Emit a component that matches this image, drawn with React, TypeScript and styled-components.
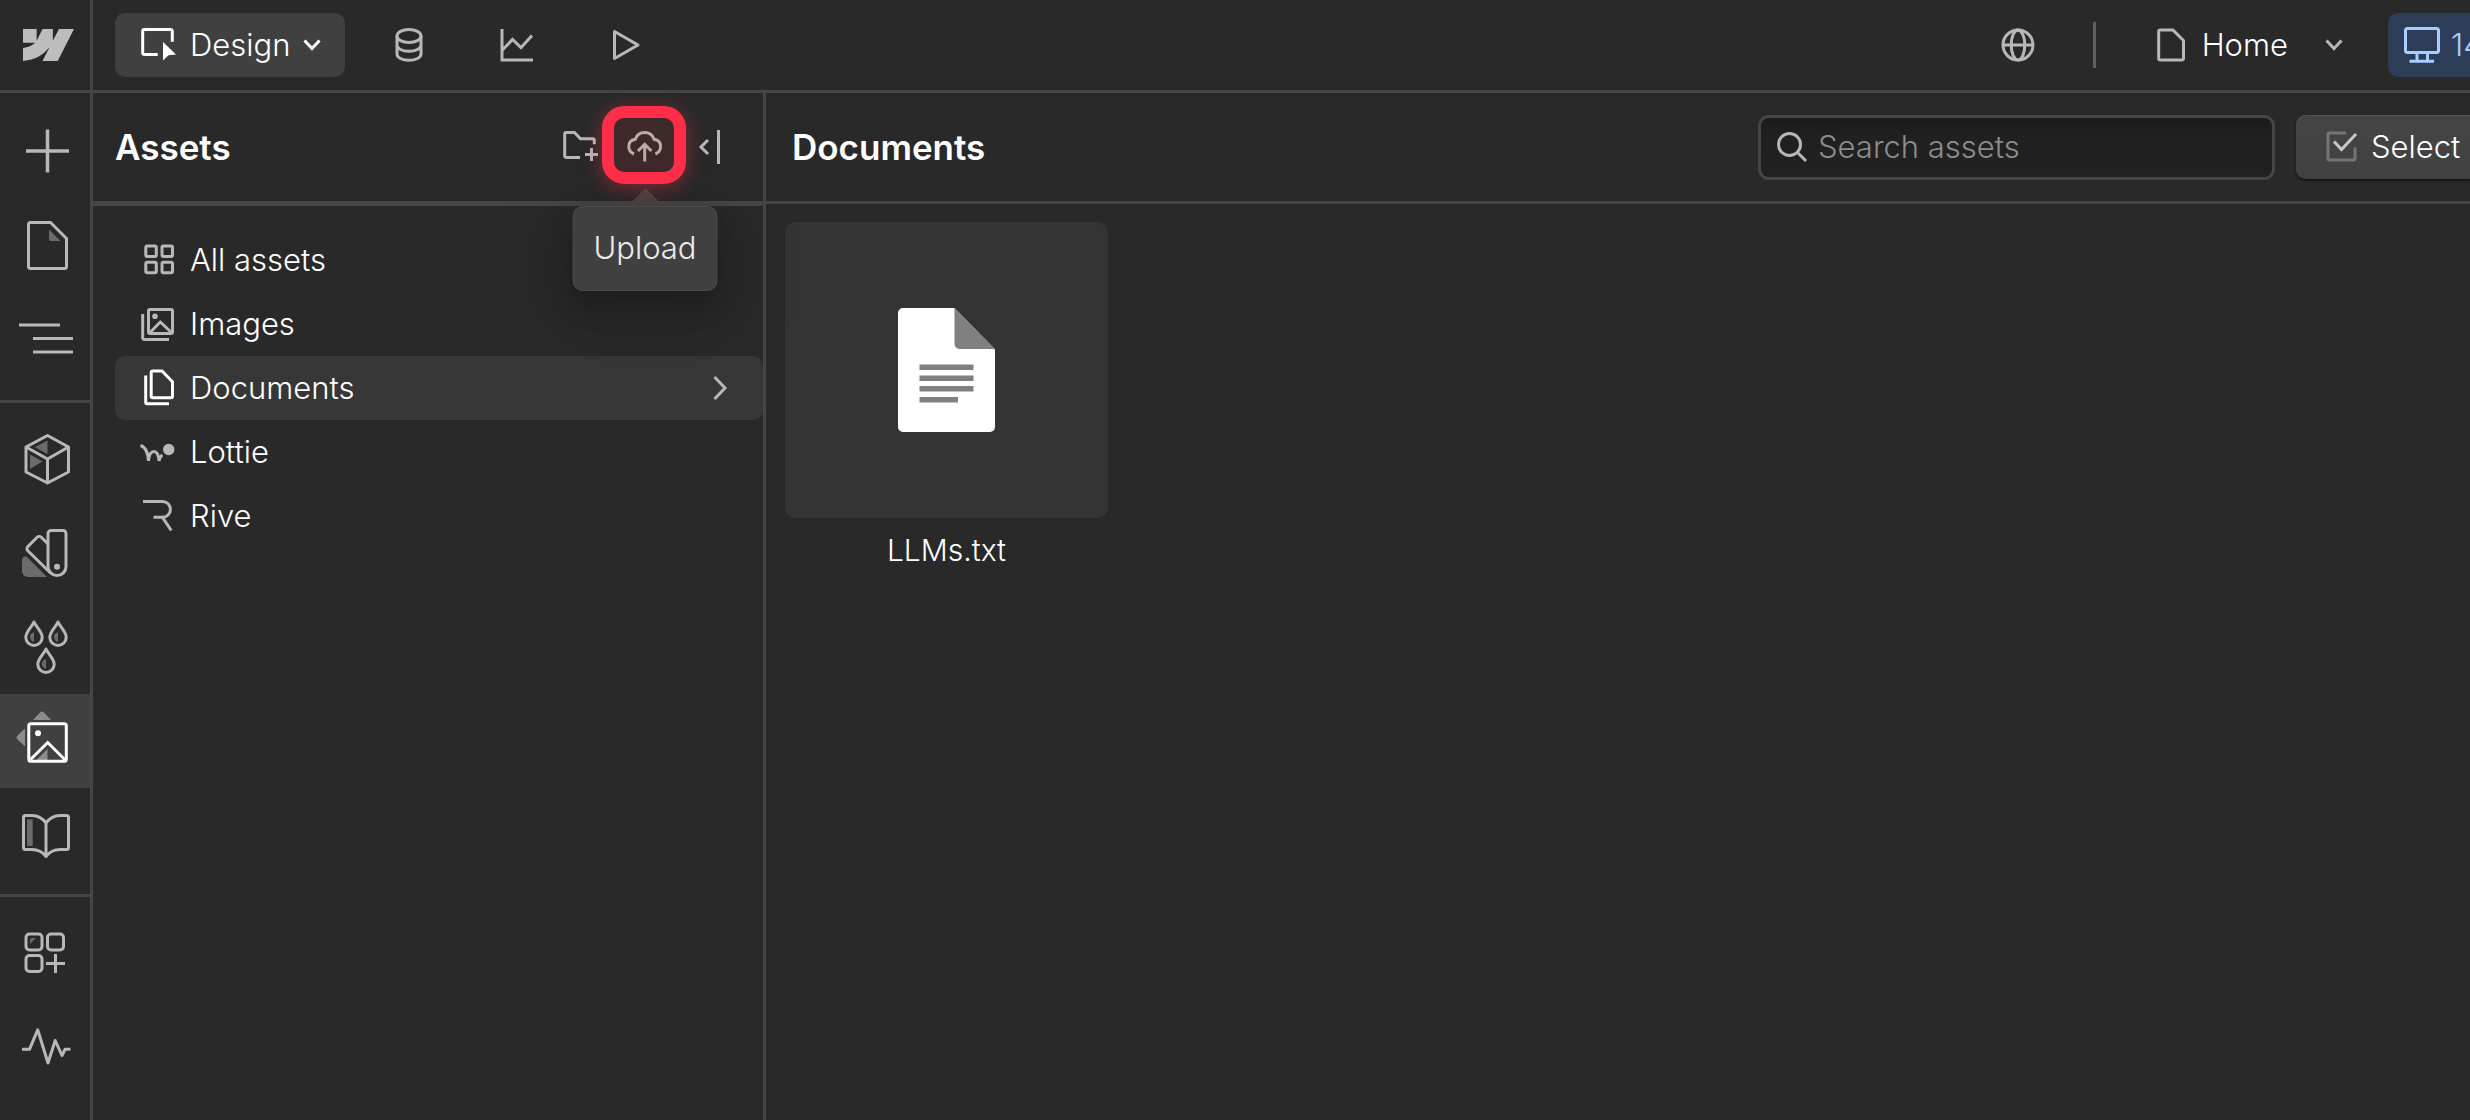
import React from 'react';
import styled, { createGlobalStyle } from 'styled-components';

const color = {
  bg: '#292929',
  line: '#464646',
  raised: '#404040',
  selected: '#373737',
  tile: '#343434',
  icon: '#b8b8b8',
  iconFill: '#6b6b6b',
  text: '#ffffff',
  muted: '#8c8c8c',
  accent: '#ff2e48',
};

const GlobalStyle = createGlobalStyle`
  *, *::before, *::after { box-sizing: border-box; }
  body {
    margin: 0;
    background: ${color.bg};
    color: ${color.text};
    font-family: Inter, "Liberation Sans", sans-serif;
    font-size: 31px;
    font-weight: 300;
    line-height: 40px;
    overflow: hidden;
  }
  button, input { font: inherit; color: inherit; margin: 0; }
  button { background: none; border: 0; padding: 0; cursor: pointer; }
`;

const Shell = styled.div`
  display: flex;
  min-height: 100vh;
`;

const Rail = styled.nav`
  flex: none;
  width: 93px;
  border-right: 3px solid ${color.line};
`;

const LogoLink = styled.a`
  display: flex;
  align-items: center;
  justify-content: center;
  height: 93px;
  padding-left: 6px;
  border-bottom: 3px solid ${color.line};
`;

const RailGroup = styled.div<{ $first?: boolean }>`
  display: flex;
  flex-direction: column;
  padding: ${p => (p.$first ? '11px 0 14px' : '9px 0 12px')};

  & + & { border-top: 3px solid ${color.line}; }
`;

const RailButton = styled.button<{ $active?: boolean }>`
  display: flex;
  align-items: center;
  justify-content: center;
  height: 94px;
  color: ${p => (p.$active ? color.text : color.icon)};
  background: ${p => (p.$active ? color.raised : 'transparent')};
`;

const Glyph = styled.svg`
  display: block;
  flex: none;
  overflow: visible;
  fill: none;
  stroke: currentColor;
  stroke-width: 3;

  .shade { fill: ${color.iconFill}; stroke: none; }
  .shade-light { fill: #8c8c8c; stroke: none; }
  .solid { fill: currentColor; stroke: none; }
`;

const Workspace = styled.div`
  flex: 1;
  min-width: 0;
  display: flex;
  flex-direction: column;
`;

const TopBar = styled.header`
  display: flex;
  align-items: center;
  height: 93px;
  padding-left: 22px;
  border-bottom: 3px solid ${color.line};
`;

const ModeButton = styled.button`
  display: flex;
  align-items: center;
  width: 230px;
  height: 64px;
  padding-left: 26px;
  gap: 13px;
  border-radius: 10px;
  background: ${color.raised};
`;

const TopTools = styled.div`
  display: flex;
  margin-left: 10px;
`;

const ToolButton = styled.button`
  display: flex;
  align-items: center;
  justify-content: center;
  width: 108px;
  height: 64px;
  color: ${color.icon};
`;

const TopRight = styled.div`
  display: flex;
  align-items: center;
  margin-left: auto;
`;

const Separator = styled.span`
  width: 3px;
  height: 46px;
  margin: 0 61px 0 21px;
  background: #5e5e5e;
`;

const PageButton = styled.button`
  display: flex;
  align-items: center;
  gap: 17px;
  height: 64px;
  margin-right: 45px;

  svg { color: ${color.icon}; }
  svg:last-child { margin-left: 20px; }
`;

const BreakpointButton = styled.button`
  display: flex;
  align-items: center;
  gap: 11px;
  width: 82px;
  height: 64px;
  padding-left: 16px;
  border-radius: 10px 0 0 10px;
  background: #2e3d57;
  color: #a9cdff;
  overflow: hidden;
`;

const Body = styled.div`
  flex: 1;
  display: flex;
`;

const Panel = styled.aside`
  flex: none;
  width: 673px;
  border-right: 3px solid ${color.line};
`;

const PanelHeader = styled.div`
  display: flex;
  align-items: center;
  height: 113px;
  padding: 0 22px;
  border-bottom: 5px solid ${color.line};
`;

const Title = styled.h2`
  margin: 0 auto 0 0;
  font-size: 35px;
  line-height: 40px;
  font-weight: 600;
`;

const PanelActions = styled.div`
  display: flex;
`;

const ActionButton = styled.button`
  display: flex;
  align-items: center;
  justify-content: center;
  width: 64px;
  height: 64px;
  color: ${color.icon};
`;

const ActionAnchor = styled.div`
  position: relative;
`;

const Highlight = styled.span`
  position: absolute;
  z-index: 3;
  top: -9px;
  left: -11px;
  width: 84px;
  height: 78px;
  border: 12px solid ${color.accent};
  border-radius: 22px;
  background: rgba(255, 46, 72, 0.1);
  box-shadow: 0 4px 20px rgba(255, 46, 72, 0.4);
  pointer-events: none;
`;

const Tooltip = styled.div`
  position: absolute;
  z-index: 2;
  top: 91px;
  left: 50%;
  width: 145px;
  padding: 22px 0 23px;
  transform: translateX(-50%);
  border-radius: 10px;
  background: ${color.raised};
  box-shadow: 0 14px 28px rgba(0, 0, 0, 0.2), 0 20px 70px 20px rgba(0, 0, 0, 0.12),
    inset 0 0 0 1px rgba(255, 255, 255, 0.05);
  color: #ebebeb;
  text-align: center;

  &::before {
    content: '';
    position: absolute;
    bottom: 100%;
    left: 50%;
    border: 18px solid transparent;
    border-top: 0;
    border-bottom-color: ${color.raised};
    transform: translateX(-50%);
  }
`;

const FolderList = styled.ul`
  margin: 0;
  padding: 22px 0 0 22px;
  list-style: none;
`;

const FolderButton = styled.button<{ $selected?: boolean }>`
  display: flex;
  align-items: center;
  width: 100%;
  height: 64px;
  padding: 0 36px 0 25px;
  gap: 14px;
  border-radius: 10px;
  background: ${p => (p.$selected ? color.selected : 'transparent')};
  text-align: left;

  svg { color: ${p => (p.$selected ? color.text : color.icon)}; }
  svg:last-child { margin-left: auto; color: ${color.icon}; }
`;

const Main = styled.main`
  flex: 1;
  min-width: 0;
`;

const MainHeader = styled.div`
  display: flex;
  align-items: center;
  height: 111px;
  padding-left: 26px;
  border-bottom: 3px solid ${color.line};
`;

const SearchField = styled.label`
  display: flex;
  align-items: center;
  gap: 11px;
  width: 517px;
  height: 65px;
  margin-right: 21px;
  padding: 0 16px;
  border: 3px solid ${color.line};
  border-radius: 11px;
  background: linear-gradient(#1b1b1b, #202020 30%, #212121);
  color: ${color.icon};
`;

const SearchInput = styled.input`
  flex: 1;
  min-width: 0;
  padding: 0;
  border: 0;
  outline: 0;
  background: none;
  color: ${color.text};

  &::placeholder { color: ${color.muted}; opacity: 1; }
`;

const SelectButton = styled.button`
  display: flex;
  align-items: center;
  gap: 13px;
  width: 174px;
  height: 64px;
  padding-left: 30px;
  border-radius: 10px 0 0 10px;
  background: linear-gradient(#464646, #404040);
  box-shadow: inset 0 1px 0 #525252, 0 2px 2px rgba(0, 0, 0, 0.5);
`;

const AssetGrid = styled.div`
  display: grid;
  grid-template-columns: repeat(auto-fill, 323px);
  gap: 20px;
  padding: 18px 19px;
`;

const AssetCard = styled.figure`
  margin: 0;
  text-align: center;
`;

const AssetThumb = styled.div`
  display: flex;
  align-items: center;
  justify-content: center;
  height: 296px;
  border-radius: 10px;
  background: ${color.tile};
`;

const AssetName = styled.figcaption`
  padding-top: 12px;
  font-size: 30px;
`;

type IconProps = { w: number; h: number; children: React.ReactNode };

const Icon = ({ w, h, children }: IconProps) => (
  <Glyph width={w} height={h} viewBox={`0 0 ${w} ${h}`} aria-hidden="true">
    {children}
  </Glyph>
);

const ChevronDown = () => (
  <Icon w={18} h={12}><path d="M1.5 1.5 9 9.5l7.5-8" /></Icon>
);

const ChevronRight = () => (
  <Icon w={14} h={24}><path d="M1.5 1 12 12 1.5 23" /></Icon>
);

const drop = 'M16 2C14.5 6 7.8 11.5 7.8 17.2a8.2 8.2 0 0 0 16.4 0C24.2 11.5 17.5 6 16 2z';

const Drop = ({ x, y }: { x: number; y: number }) => (
  <g transform={`translate(${x} ${y})`}>
    <path d={drop} strokeLinejoin="round" />
    <path className="shade" d="M16 12.5a4 4.5 0 0 0 0 9z" />
  </g>
);

type RailItem = { label: string; icon: React.ReactNode; active?: boolean };

const railGroups: RailItem[][] = [
  [
    { label: 'Add elements', icon: <path d="M8 27h43M29.5 5.5v43" strokeWidth="3.5" /> },
    {
      label: 'Pages',
      icon: (
        <>
          <path d="M12.5 4.5h20l16 16v28a2 2 0 0 1-2 2h-34a2 2 0 0 1-2-2v-42a2 2 0 0 1 2-2z" />
          <path className="shade" d="M31 11.5 42.5 23H33a2 2 0 0 1-2-2z" />
        </>
      ),
    },
    { label: 'Navigator', icon: <path d="M1 13h41M15 26.5h40M15 40h40" /> },
  ],
  [
    {
      label: 'Components',
      icon: (
        <>
          <path className="shade" d="M29.5 8.5v13.5L17 15.2zM12 22.5l12.5 7L12 37z" />
          <path
            d="M29.5 3.5 50.5 15v25l-21 11L8 40V15zM8 15l21.5 12 21-12M29.5 27v24"
            strokeLinejoin="round"
          />
        </>
      ),
    },
    {
      label: 'Variables',
      icon: (
        <>
          <path className="shade" d="M4 34c0-3 3-4.5 5.5-2.5L29 51H10a6 6 0 0 1-6-6z" />
          <path d="M33 4.5h12a3 3 0 0 1 3 3v33a9 9 0 0 1-18 0v-33a3 3 0 0 1 3-3z" />
          <path d="m30 18-6.7-6.7a3 3 0 0 0-4.2 0L9.8 20.6a3 3 0 0 0 0 4.2L32.5 47" />
          <circle className="solid" cx="39" cy="40.7" r="3" />
        </>
      ),
    },
    {
      label: 'Style selectors',
      icon: (
        <>
          <Drop x={0} y={0} />
          <Drop x={24} y={0} />
          <Drop x={12} y={27} />
        </>
      ),
    },
    {
      label: 'Assets',
      active: true,
      icon: (
        <>
          <path className="shade-light" d="M15 6l7-7.5c1.3-1.3 2.7-1.3 4 0L33 6zM7 14.5v18l-7.5-7c-1.3-1.3-1.3-2.7 0-4z" />
          <path className="shade-light" d="M29.5 35v11H18.5z" />
          <rect x="10.8" y="9.8" width="37.5" height="37.5" rx="2" />
          <path d="m11.5 46.5 18.2-18 18 18" />
          <circle className="solid" cx="20" cy="19.3" r="3" />
        </>
      ),
    },
    {
      label: 'Libraries',
      icon: (
        <>
          <path className="shade" d="M9 11.3h5.7V38H9z" />
          <path
            d="M28 15c-3-4-8-7.5-14-7.5H7.5a2 2 0 0 0-2 2v30a2 2 0 0 0 2 2H14c6 0 11 3 14 7 3-4 8-7 14-7h6.5a2 2 0 0 0 2-2v-30a2 2 0 0 0-2-2H42c-6 0-11 3.5-14 7.5v33.5"
            strokeLinejoin="round"
          />
        </>
      ),
    },
  ],
  [
    {
      label: 'Apps',
      icon: (
        <>
          <rect x="8" y="8" width="16" height="16" rx="3.5" />
          <rect x="29.5" y="8" width="16" height="16" rx="3.5" />
          <rect x="8" y="29.5" width="16" height="16" rx="3.5" />
          <path d="M28 37.5h19M37.5 28v19" />
          <path className="shade" d="M12 14a2 2 0 0 1 2-2h4l-6 6z" />
        </>
      ),
    },
    {
      label: 'Activity',
      icon: <path d="M4 29.3h7.5l8.2-19.5L30 43l7.2-22.5L44 35.5l3-6.2h5.5" strokeLinejoin="round" />,
    },
  ],
];

type Folder = { name: string; icon: React.ReactNode; selected?: boolean };

const folders: Folder[] = [
  {
    name: 'All assets',
    icon: (
      <>
        <rect x="5.8" y="4" width="10.5" height="10.5" rx="1.5" />
        <rect x="22" y="4" width="10.5" height="10.5" rx="1.5" />
        <rect x="5.8" y="20.2" width="10.5" height="10.5" rx="1.5" />
        <rect x="22" y="20.2" width="10.5" height="10.5" rx="1.5" />
      </>
    ),
  },
  {
    name: 'Images',
    icon: (
      <>
        <rect x="8.5" y="3.5" width="24" height="24" rx="1.5" />
        <path d="m9.5 27 10.8-11L32 27M2.7 8v24a1.5 1.5 0 0 0 1.5 1.5H29" />
        <circle className="solid" cx="15" cy="10.3" r="2.8" />
      </>
    ),
  },
  {
    name: 'Documents',
    selected: true,
    icon: (
      <>
        <path d="M12.7 1h9.3L32.5 11.8v14.5a1.5 1.5 0 0 1-1.5 1.5H12.7a1.5 1.5 0 0 1-1.5-1.5V2.5a1.5 1.5 0 0 1 1.5-1.5z" />
        <path d="M5.7 5.5v26.8a1.5 1.5 0 0 0 1.5 1.5H29" />
      </>
    ),
  },
  {
    name: 'Lottie',
    icon: (
      <>
        <path d="M.5 11.5C6 13 8 19 8.5 27c.5-6 2.5-9.5 5.5-9.5S18.5 21 19 27c.5-3 1.5-5 3.5-6" />
        <circle className="solid" cx="28.7" cy="15.5" r="5.7" />
      </>
    ),
  },
  {
    name: 'Rive',
    icon: <path d="M3 3.5h19.5a7.9 7.9 0 0 1 0 15.8h-9M22.5 19.3l8.8 13.2" />,
  },
];

const FileArt = () => (
  <svg width="97" height="124" viewBox="0 0 97 124" aria-hidden="true">
    <path fill="#fff" d="M5 0h51.5L97 41.5V119a5 5 0 0 1-5 5H5a5 5 0 0 1-5-5V5a5 5 0 0 1 5-5z" />
    <path fill="#808080" d="M56.5 0 97 41H61.5a5 5 0 0 1-5-5zM21.5 56.5h54V62h-54zM21.5 67.5h54V73h-54zM21.5 78h54v5.5h-54zM21.5 89h38.5v5.5H21.5z" />
  </svg>
);

export default function App() {
  return (
    <Shell>
      <GlobalStyle />
      <Rail aria-label="Tools">
        <LogoLink href="#" aria-label="Dashboard">
          <svg width="51" height="32" viewBox="0 0 1080 674" aria-hidden="true">
            <path
              fill="#bdbdbd"
              d="M1080 0 735.4 673.7H411.7l144.2-279.2h-6.5C430.5 548.9 253 650.5 0 673.7V398.4s161.9-9.6 257-109.6H0V0h288.9v237.6h6.5L413.5 0H632v236.1h6.5L761 0z"
            />
          </svg>
        </LogoLink>
        {railGroups.map((group, i) => (
          <RailGroup key={i} $first={i === 0}>
            {group.map(item => (
              <RailButton key={item.label} type="button" aria-label={item.label} $active={item.active}>
                <Icon w={54} h={54}>{item.icon}</Icon>
              </RailButton>
            ))}
          </RailGroup>
        ))}
      </Rail>

      <Workspace>
        <TopBar>
          <ModeButton type="button">
            <Icon w={36} h={34}>
              <path d="M16.7 26.5H3.2A1.5 1.5 0 0 1 1.7 25V3a1.5 1.5 0 0 1 1.5-1.5h26.6A1.5 1.5 0 0 1 31.3 3v10.7" />
              <path className="solid" d="m22 14 13 12.5-7.5.8L22 32.5z" />
            </Icon>
            Design
            <ChevronDown />
          </ModeButton>
          <TopTools>
            <ToolButton type="button" aria-label="CMS">
              <Icon w={28} h={34}>
                <ellipse cx="14" cy="8" rx="12" ry="6.5" />
                <path d="M2 8v18c0 3.5 5.2 6.3 12 6.3S26 29.5 26 26V8M2 17c0 3.5 5.2 6.3 12 6.3S26 20.5 26 17" />
              </Icon>
            </ToolButton>
            <ToolButton type="button" aria-label="Insights">
              <Icon w={34} h={34}>
                <path d="M2 1v31h31M2 22.5 12.5 11.5l8.5 8.2L32 7.5" />
              </Icon>
            </ToolButton>
            <ToolButton type="button" aria-label="Preview">
              <Icon w={28} h={34}>
                <path d="M3.5 3.5 27 17 3.5 30.5z" strokeLinejoin="round" />
              </Icon>
            </ToolButton>
          </TopTools>
          <TopRight>
            <ToolButton type="button" aria-label="Locale">
              <Icon w={34} h={34}>
                <circle cx="17" cy="17" r="15" />
                <ellipse cx="17" cy="17" rx="6.8" ry="15" />
                <path d="M2 17h30" />
              </Icon>
            </ToolButton>
            <Separator />
            <PageButton type="button">
              <Icon w={28} h={34}>
                <path d="M3.2 2h12.8L26.5 12.5v18A1.5 1.5 0 0 1 25 32H3.2a1.5 1.5 0 0 1-1.5-1.5v-27A1.5 1.5 0 0 1 3.2 2z" />
              </Icon>
              Home
              <ChevronDown />
            </PageButton>
            <BreakpointButton type="button">
              <Icon w={36} h={36}>
                <rect x="1.5" y="1.5" width="33" height="24" rx="2" />
                <path d="M13 26v8M23.5 26v8M5.5 34.2H30" />
              </Icon>
              14
            </BreakpointButton>
          </TopRight>
        </TopBar>

        <Body>
          <Panel>
            <PanelHeader>
              <Title>Assets</Title>
              <PanelActions>
                <ActionButton type="button" aria-label="New folder">
                  <Icon w={36} h={32}>
                    <path d="M17 26.5H3.2A1.5 1.5 0 0 1 1.7 25V3a1.5 1.5 0 0 1 1.5-1.5h8.3l6 6.2h12.3a1.5 1.5 0 0 1 1.5 1.5v4M28.5 17v13M22 23.5h13" />
                  </Icon>
                </ActionButton>
                <ActionAnchor>
                  <ActionButton type="button" aria-describedby="upload-tip" aria-label="Upload">
                    <Icon w={36} h={32}>
                      <path d="M7 23c-3.5-1.5-5.2-4.4-5.2-7.5 0-4 2.7-6.7 6.5-7.3C9.8 4 13.4 1.6 17.7 1.6s7.9 2.4 9.4 6.6c3.8.6 6.5 3.3 6.5 7.3 0 3.1-1.7 6-5.2 7.5M17.7 30.5V13M11 20l6.7-6.7 6.7 6.7" />
                    </Icon>
                  </ActionButton>
                  <Highlight />
                  <Tooltip role="tooltip" id="upload-tip">Upload</Tooltip>
                </ActionAnchor>
                <ActionButton type="button" aria-label="Collapse panel">
                  <Icon w={20} h={34}>
                    <path d="m9 10-7 7 7 7M19.5 0v34" />
                  </Icon>
                </ActionButton>
              </PanelActions>
            </PanelHeader>
            <FolderList>
              {folders.map(folder => (
                <li key={folder.name}>
                  <FolderButton type="button" $selected={folder.selected}>
                    <Icon w={36} h={36}>{folder.icon}</Icon>
                    <span>{folder.name}</span>
                    {folder.selected && <ChevronRight />}
                  </FolderButton>
                </li>
              ))}
            </FolderList>
          </Panel>

          <Main>
            <MainHeader>
              <Title>Documents</Title>
              <SearchField>
                <Icon w={30} h={30}>
                  <circle cx="12.5" cy="12.5" r="11" />
                  <path d="m20.5 20.5 8.5 8.5" />
                </Icon>
                <SearchInput type="search" placeholder="Search assets" aria-label="Search assets" />
              </SearchField>
              <SelectButton type="button">
                <Icon w={32} h={32}>
                  <path stroke="#757575" d="M20 2H3.5A1.5 1.5 0 0 0 2 3.5v24A1.5 1.5 0 0 0 3.5 29h24a1.5 1.5 0 0 0 1.5-1.5V16.5" />
                  <path stroke="#c8c8c8" d="m8 10.5 7.5 8L30 3" />
                </Icon>
                Select
              </SelectButton>
            </MainHeader>
            <AssetGrid>
              <AssetCard>
                <AssetThumb><FileArt /></AssetThumb>
                <AssetName>LLMs.txt</AssetName>
              </AssetCard>
            </AssetGrid>
          </Main>
        </Body>
      </Workspace>
    </Shell>
  );
}
